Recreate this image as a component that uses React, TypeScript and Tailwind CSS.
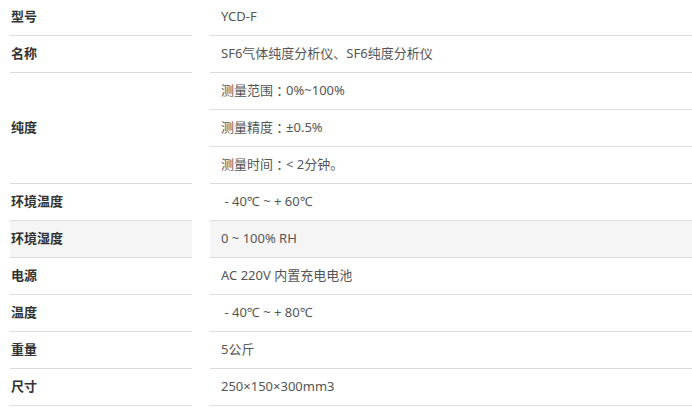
import React from "react";

type Row = { label: string; values: string[]; hover?: boolean };

const rows: Row[] = [
  { label: "型号", values: ["YCD-F"] },
  { label: "名称", values: ["SF6气体纯度分析仪、SF6纯度分析仪"] },
  {
    label: "纯度",
    values: ["测量范围：0%~100%", "测量精度：±0.5%", "测量时间：< 2分钟。"],
  },
  { label: "环境温度", values: [" - 40℃ ~ + 60℃"] },
  { label: "环境湿度", values: ["0 ~ 100% RH"], hover: true },
  { label: "电源", values: ["AC 220V 内置充电电池"] },
  { label: "温度", values: [" - 40℃ ~ + 80℃"] },
  { label: "重量", values: ["5公斤"] },
  { label: "尺寸", values: ["250×150×300mm3"] },
];

// full-width colon centred, as in the original font
const renderValue = (v: string) => {
  const parts = v.split("：");
  if (parts.length === 1) return v;
  return (
    <>
      {parts[0]}
      <span className="font-['Noto_Sans_CJK_JP',sans-serif]">：</span>
      {parts[1]}
    </>
  );
};

const App: React.FC = () => {
  return (
    <div className="-mt-px h-[408px] w-[692px] overflow-hidden bg-white font-['Noto_Sans','Noto_Sans_CJK_SC',sans-serif] text-[13px]">
      <div className="grid grid-cols-[182px_1fr] gap-x-[18px] pl-[10px]">
        {rows.map((row) => (
          <React.Fragment key={row.label}>
            <div
              className={
                "flex items-center border-b border-[#dddddd] pl-px font-bold text-[#333333] " +
                (row.values.length === 3 ? "row-span-3 " : "") +
                (row.hover ? "bg-[#f5f5f5]" : "")
              }
            >
              {row.label}
            </div>
            {row.values.map((v) => (
              <div
                key={v}
                className={
                  "flex h-[37px] items-center whitespace-pre border-b border-[#dddddd] pl-[11px] text-[#555555] " +
                  (row.hover ? "bg-[#f5f5f5]" : "")
                }
              >
                {renderValue(v)}
              </div>
            ))}
          </React.Fragment>
        ))}
      </div>
    </div>
  );
};

export default App;
